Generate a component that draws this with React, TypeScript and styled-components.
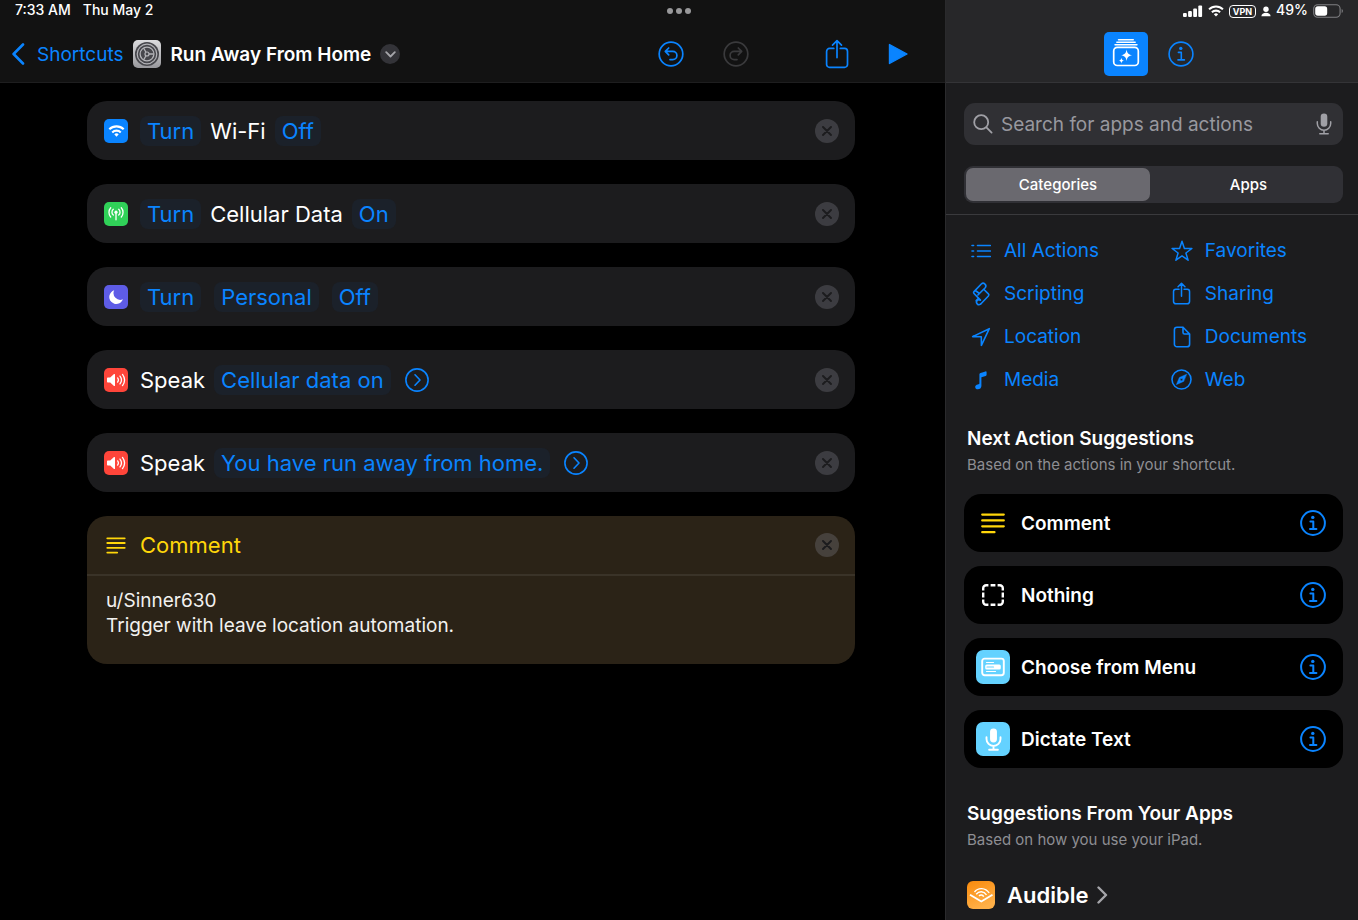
import React from 'react';
import styled, { createGlobalStyle } from 'styled-components';

const c = {
  blue: '#0a84ff',
  yellow: '#ffd60a',
  card: '#1c1c1e',
  panel: '#1c1c1e',
  grey: '#8e8e93',
};

const GlobalStyle = createGlobalStyle`
  *, *::before, *::after { box-sizing: border-box; }
  body {
    margin: 0;
    background: #000;
    color: #fff;
    font-family: Inter, "Liberation Sans", sans-serif;
    -webkit-font-smoothing: antialiased;
  }
  button, input, textarea { font: inherit; color: inherit; }
  button { border: 0; padding: 0; background: none; cursor: pointer; }
  h1, h2, p { margin: 0; }
  a { text-decoration: none; }
  svg { display: block; flex: none; }
`;

/* ---------- shell ---------- */

const Page = styled.div`
  display: grid;
  grid-template-columns: minmax(0, 1fr) 413px;
  min-height: 100vh;
`;
const Editor = styled.main`
  background: #000;
`;
const Sidebar = styled.aside`
  background: ${c.panel};
  border-left: 1px solid #2a2a2c;
`;
const Header = styled.header<{ $side?: boolean }>`
  display: grid;
  grid-template-rows: 22px 1fr;
  height: 83px;
  background: ${p => (p.$side ? '#272729' : '#121212')};
  border-bottom: 1px solid ${p => (p.$side ? '#343437' : '#1e1e1f')};
`;
const Status = styled.div<{ $end?: boolean }>`
  display: flex;
  align-items: center;
  justify-content: ${p => (p.$end ? 'flex-end' : 'flex-start')};
  gap: ${p => (p.$end ? '5px' : '12px')};
  height: 22px;
  padding: 0 14px 0 15px;
  font-size: 14px;
  line-height: 20px;
  font-weight: 500;
`;
const StatusText = styled.span`
  padding-bottom: 2px;
`;
const Dots = styled.button`
  display: flex;
  gap: 3px;
  margin-left: auto;
  margin-right: 240px;
`;
const Dot = styled.span`
  width: 6px;
  height: 6px;
  border-radius: 50%;
  background: #98989a;
`;
const Vpn = styled.span`
  padding: 0 3px;
  border: 1px solid #fff;
  border-radius: 4px;
  font-size: 9px;
  line-height: 11px;
  font-weight: 700;
`;

/* ---------- toolbar ---------- */

const Toolbar = styled.div`
  display: flex;
  align-items: center;
  height: 64px;
  padding: 0 37px 0 11px;
`;
const Back = styled.a`
  display: flex;
  align-items: center;
  gap: 12px;
  color: ${c.blue};
  font-size: 19px;
`;
const Title = styled.h1`
  display: flex;
  align-items: center;
  gap: 9px;
  margin-left: 10px;
  font-size: 19px;
  font-weight: 600;
  white-space: nowrap;
`;
const RoundButton = styled.button<{ $size: number; $bg: string }>`
  display: grid;
  place-items: center;
  flex: none;
  width: ${p => p.$size}px;
  height: ${p => p.$size}px;
  border-radius: 50%;
  background: ${p => p.$bg};
`;
const Tools = styled.div`
  display: flex;
  align-items: center;
  margin-left: auto;
`;
const Tool = styled.button<{ $gap?: number }>`
  display: flex;
  color: ${c.blue};
  margin-left: ${p => p.$gap ?? 0}px;
  &:disabled { color: #3a3a3c; cursor: default; }
`;
const PanelTabs = styled.div`
  display: flex;
  align-items: center;
  justify-content: center;
  gap: 20px;
  height: 64px;
  padding-right: 6px;
`;
const PanelTab = styled.button<{ $on?: boolean }>`
  display: flex;
  border-radius: 5px;
  color: ${p => (p.$on ? '#fff' : c.blue)};
  background: ${p => (p.$on ? c.blue : 'none')};
`;

/* ---------- action list ---------- */

const Actions = styled.div`
  display: flex;
  flex-direction: column;
  gap: 24px;
  padding: 18px 90px 40px 87px;
`;
const Card = styled.section<{ $note?: boolean }>`
  border-radius: 20px;
  background: ${p => (p.$note ? '#2b2317' : c.card)};
`;
const CardRow = styled.div<{ $note?: boolean }>`
  display: flex;
  align-items: center;
  height: ${p => (p.$note ? 58 : 59)}px;
  padding: 0 16px 0 17px;
  gap: 12px;
  font-size: 22px;
  color: ${p => (p.$note ? c.yellow : '#fff')};
`;
const Badge = styled.span<{ $bg?: string; $size?: number }>`
  display: grid;
  place-items: center;
  flex: none;
  width: ${p => p.$size ?? 24}px;
  height: ${p => p.$size ?? 24}px;
  border-radius: ${p => ((p.$size ?? 24) > 24 ? 7 : 5)}px;
  background: ${p => p.$bg ?? 'none'};
`;
const Phrase = styled.div`
  display: flex;
  align-items: center;
  flex: 1;
  gap: 9px;
  min-width: 0;
  white-space: nowrap;
`;
const Token = styled.button`
  height: 30px;
  padding: 0 7px;
  border-radius: 8px;
  background: #1b212a;
  color: ${c.blue};
  & + & { margin-left: 4px; }
`;
const More = styled.button`
  display: flex;
  margin-left: 5px;
  color: ${c.blue};
`;
const NoteText = styled.textarea`
  display: block;
  width: 100%;
  height: 90px;
  padding: 12px 19px 0;
  border: 0;
  border-top: 2px solid #3a3328;
  background: none;
  outline: 0;
  resize: none;
  overflow: hidden;
  color: #f2f1ef;
  font-size: 19px;
  line-height: 25px;
`;

/* ---------- sidebar ---------- */

const Finder = styled.div`
  padding: 20px 15px 11px 18px;
  border-bottom: 1px solid #3a3a3d;
`;
const Search = styled.label`
  display: flex;
  align-items: center;
  gap: 8px;
  height: 42px;
  padding: 0 11px 0 9px;
  border-radius: 11px;
  background: #303034;
  color: #a0a0a6;
`;
const SearchInput = styled.input`
  flex: 1;
  min-width: 0;
  padding: 0;
  border: 0;
  outline: 0;
  background: none;
  font-size: 19px;
  &::placeholder { color: #98989f; opacity: 1; }
`;
const Segments = styled.div`
  display: grid;
  grid-template-columns: 184px 1fr;
  column-gap: 6px;
  margin-top: 21px;
  height: 37px;
  padding: 2px;
  border-radius: 9px;
  background: #303035;
`;
const Segment = styled.button<{ $on?: boolean }>`
  border-radius: 7px;
  background: ${p => (p.$on ? '#6a696f' : 'none')};
  font-size: 15px;
  line-height: 20px;
  font-weight: 500;
`;
const Content = styled.div`
  padding: 14px 15px 11px 18px;
`;
const Categories = styled.nav`
  display: grid;
  grid-template-columns: 53% 1fr;
  grid-auto-rows: 43px;
`;
const Category = styled.a`
  display: grid;
  grid-template-columns: 34px 1fr;
  align-items: center;
  gap: 6px;
  color: ${c.blue};
  font-size: 19px;
  & > svg { justify-self: center; }
`;
const Heading = styled.h2<{ $top: number }>`
  margin: ${p => p.$top}px 3px 4px;
  font-size: 19px;
  line-height: 24px;
  font-weight: 600;
`;
const Sub = styled.p`
  margin: 0 3px;
  font-size: 15px;
  line-height: 20px;
  color: ${c.grey};
`;
const Suggestions = styled.div`
  display: grid;
  gap: 14px;
  margin-top: 19px;
`;
const Suggestion = styled.div`
  display: flex;
  align-items: center;
  gap: 11px;
  height: 58px;
  padding: 0 17px 0 12px;
  border-radius: 17px;
  background: #000;
  font-size: 19px;
  font-weight: 600;
`;
const Name = styled.span`
  flex: 1;
`;
const AppLink = styled.a`
  display: inline-flex;
  align-items: center;
  gap: 12px;
  margin: 31px 3px 0;
  color: #fff;
  font-size: 22px;
  line-height: 28px;
  font-weight: 600;
`;
const AppName = styled.span`
  display: flex;
  align-items: center;
  gap: 9px;
`;

/* ---------- icons ---------- */

type IconProps = { w: number; h?: number; box?: string; sw?: number; children: React.ReactNode };
const Icon = ({ w, h = w, box, sw = 1.6, children }: IconProps) => (
  <svg width={w} height={h} viewBox={box ?? `0 0 ${w} ${h}`} fill="none" stroke="currentColor"
    strokeWidth={sw} strokeLinecap="round" strokeLinejoin="round" aria-hidden="true">
    {children}
  </svg>
);

const WifiGlyph = ({ w, h }: { w: number; h: number }) => (
  <Icon w={w} h={h} box="0 0 18 13" sw={2.3}>
    <path d="M1.2 4.7a11 11 0 0 1 15.600 0M4.400 8a6.500 6.500 0 0 1 9.200 0" strokeLinecap="butt" />
    <path d="M9 12.6 6.6 10.1a3.5 3.5 0 0 1 4.8 0Z" fill="currentColor" stroke="none" />
  </Icon>
);
const Signal = () => (
  <Icon w={20} h={12}>
    <g fill="currentColor" stroke="none">
      <rect x="0" y="8" width="3.8" height="4" rx="1" />
      <rect x="5.1" y="6" width="3.8" height="6" rx="1" />
      <rect x="10.2" y="3.4" width="3.8" height="8.6" rx="1" />
      <rect x="15.3" y="0.6" width="3.8" height="11.4" rx="1" />
    </g>
  </Icon>
);
const Person = () => (
  <Icon w={10} h={11}>
    <g fill="currentColor" stroke="none">
      <circle cx="5" cy="3.2" r="2.7" />
      <path d="M0.4 10.2c0-2.2 2-3.4 4.6-3.4s4.6 1.2 4.6 3.4Z" />
    </g>
  </Icon>
);
const Battery = () => (
  <Icon w={31} h={14} sw={1.1}>
    <rect x="0.7" y="0.8" width="26.4" height="12.4" rx="4" stroke="#808083" />
    <rect x="2.2" y="2.3" width="12" height="9.4" rx="2.600" fill="#fff" stroke="none" />
    <path d="M28.700 5v4c1.600-.7 1.600-3.300 0-4Z" fill="#808083" stroke="none" />
  </Icon>
);
const Chevron = () => <Icon w={14} h={22} sw={2.6}><path d="M12 1.5 2.6 11l9.4 9.5" /></Icon>;
const Gear = () => (
  <svg width="28" height="28" viewBox="0 0 28 28" fill="none" aria-hidden="true">
    <defs>
      <linearGradient id="gearBg" x1="0" y1="0" x2="0" y2="1">
        <stop offset="0" stopColor="#dcdcde" />
        <stop offset="1" stopColor="#98989c" />
      </linearGradient>
    </defs>
    <rect width="28" height="28" rx="5" fill="url(#gearBg)" />
    <circle cx="14" cy="14" r="12" fill="#47474c" />
    <circle cx="14" cy="14" r="9.800" stroke="#b4b4b8" strokeWidth="1.200" />
    <circle cx="14" cy="14" r="6.900" stroke="#b4b4b8" strokeWidth="1.300" />
    <path d="M16 14h4.500M13 12.300l-2.300-4M13 15.700l-2.300 4" stroke="#b4b4b8" strokeWidth="1.300" />
    <circle cx="14" cy="14" r="2" stroke="#b4b4b8" strokeWidth="1.200" />
  </svg>
);
const Undo = ({ flip }: { flip?: boolean }) => (
  <Icon w={26} sw={1.7}>
    <circle cx="13" cy="13" r="11.8" />
    <g transform={flip ? 'matrix(-1 0 0 1 26 0)' : undefined}>
      <path d="M10.7 7 7.3 10.4l3.4 3.4M7.6 10.4h7.2a4.1 4.1 0 0 1 0 8.2H12" />
    </g>
  </Icon>
);
const Share = ({ w, h, sw }: { w: number; h: number; sw: number }) => (
  <Icon w={w} h={h} box="0 0 24 30" sw={sw}>
    <path d="M8.8 9.4H4.6a3 3 0 0 0-3 3v13a3 3 0 0 0 3 3h14.900a3 3 0 0 0 3-3v-13a3 3 0 0 0-3-3h-4.2M12 18.6V1.8M7.5 6.2 12 1.7l4.5 4.5" />
  </Icon>
);
const Play = () => (
  <Icon w={20} h={22} sw={1.4}>
    <path d="M1.5 1.500v19L19 11Z" fill="currentColor" />
  </Icon>
);
const Library = () => (
  <Icon w={44} sw={1.6}>
    <path d="M14.5 7.8h14.8M12.8 10.300h18.4M11 12.800h22" strokeWidth="1.4" />
    <rect x="9.7" y="15.300" width="24.6" height="18.2" rx="3.6" strokeWidth="1.7" />
    <path d="M22.6 17.6c.7 3.8 1.7 4.9 5.5 5.7-3.8.8-4.8 1.9-5.5 5.7-.7-3.8-1.7-4.900-5.5-5.7 3.800-.8 4.800-1.900 5.5-5.700ZM17.4 25.7c.4 1.9.9 2.5 2.7 2.9-1.8.4-2.3 1-2.7 2.900-.4-1.900-.9-2.500-2.700-2.900 1.800-.4 2.300-1 2.700-2.900Z" fill="currentColor" stroke="none" />
  </Icon>
);
const Info = ({ sw = 1.8 }: { sw?: number }) => (
  <Icon w={26} sw={sw}>
    <circle cx="13" cy="13" r="11.9" />
    <circle cx="12.8" cy="7.4" r="1.7" fill="currentColor" stroke="none" />
    <path d="M10.4 11.4h2.9v7.4M10 18.9h6.400" />
  </Icon>
);
const Cross = () => <Icon w={10} sw={1.9}><path d="m1 1 8 8M9 1 1 9" /></Icon>;
const Antenna = () => (
  <Icon w={18} h={14} sw={1.3}>
    <circle cx="9" cy="5.2" r="1.6" fill="currentColor" stroke="none" />
    <path d="M9 5.5v7.3M6.3 8.100a3.800 3.800 0 0 1 0-5.800M11.700 8.100a3.800 3.800 0 0 0 0-5.800M3.700 10a7 7 0 0 1 0-9.200M14.300 10a7 7 0 0 0 0-9.200" />
  </Icon>
);
const Moon = () => (
  <Icon w={16}>
    <path d="M6.200 1.300a7 7 0 1 0 8.700 9A6.700 6.700 0 0 1 6.200 1.300Z" fill="currentColor" stroke="none" />
  </Icon>
);
const Speaker = () => (
  <Icon w={20} h={14} sw={1.3}>
    <path d="M1 5.200c0-.5.3-.8.8-.8h2.400l3.800-3.300c.5-.4 1-.2 1 .4v11c0 .6-.5.8-1 .4L4.200 9.600H1.800c-.5 0-.8-.3-.8-.8Z" fill="currentColor" stroke="none" />
    <path d="M11.600 4.900a3.500 3.500 0 0 1 0 4.200M14 3.100a6.400 6.400 0 0 1 0 7.800M16.500 1.400a9.400 9.400 0 0 1 0 11.200" />
  </Icon>
);
const MoreGlyph = () => <Icon w={24} sw={1.6}><circle cx="12" cy="12" r="11.1" /><path d="m10 6.800 5 5.200-5 5.200" /></Icon>;
const Lines = ({ w, h }: { w: number; h: number }) => (
  <Icon w={w} h={h} box="0 0 24 21" sw={2.2}>
    <path d="M1.200 1.600h21.600M1.200 7.400h21.600M1.200 13.300h21.600M1.200 19.200h12.300" />
  </Icon>
);
const Glass = () => <Icon w={20} sw={1.8}><circle cx="8.200" cy="8.200" r="7" /><path d="m13.400 13.400 5.200 5.200" /></Icon>;
const Mic = ({ w, h, sw }: { w: number; h: number; sw: number }) => (
  <Icon w={w} h={h} box="0 0 16 22" sw={sw}>
    <rect x="4.700" y="0.400" width="6.600" height="13.400" rx="3.300" fill="currentColor" stroke="none" />
    <path d="M1.300 8.800v1.700a6.700 6.700 0 0 0 13.400 0V8.800M8 17.400v3M3.800 20.800h8.400" />
  </Icon>
);
const Dashed = () => (
  <Icon w={24} sw={2.4}>
    <path strokeLinecap="butt" d="M2.200 7.400V5.200a3 3 0 0 1 3-3h2.200M9.600 2.200h4.800M16.600 2.200h2.200a3 3 0 0 1 3 3v2.200M21.800 9.600v4.800M21.800 16.600v2.200a3 3 0 0 1-3 3h-2.200M14.400 21.800H9.600M7.400 21.800H5.200a3 3 0 0 1-3-3v-2.200M2.200 14.400V9.600" />
  </Icon>
);
const MenuGlyph = () => (
  <Icon w={24} h={20} sw={1.9}>
    <rect x="1.200" y="1.600" width="21.600" height="16.600" rx="2.400" />
    <path d="M5.500 5.500h7M5.500 14.500h9" strokeWidth="1.200" />
    <rect x="4.200" y="7.500" width="15.600" height="4.900" rx="1.500" fill="currentColor" stroke="none" />
    <path d="M6 10h6.500" stroke="#64d2ff" strokeWidth="1.200" />
  </Icon>
);
const ListGlyph = () => (
  <Icon w={20} h={14} sw={1.6}>
    <path d="M6.500 1.500h12.800M6.500 7h12.800M6.500 12.500h12.800M1 1.500h1.600M1 7h1.600M1 12.500h1.600" />
  </Icon>
);
const Scroll = () => (
  <Icon w={20} h={26} sw={1.6}>
    <path d="M3 10.600 10.300 3a2.700 2.700 0 0 1 3.900 3.700L6.900 14M3 10.600a1.300 1.300 0 0 0 0 1.900l6.400 6.600M12.700 8.200l4.700 4.700a1.500 1.500 0 0 1 0 2.100l-7.900 8.200M3 10.600l1.200-1.100 4.300 3" />
    <path d="M9.500 23.200a2.500 2.500 0 1 1-.1-4.100" />
    <path d="m5.200 19.700 2.400-2.300" />
  </Icon>
);
const Arrow = () => <Icon w={20} sw={1.6}><path d="M1.600 9.600 18.300 1.700l-7.900 16.700-.1-8.700Z" /></Icon>;
const Note = () => (
  <Icon w={14} h={20}>
    <path d="M5.400 4.300c0-.7.4-1.200 1.100-1.400l5-1.500c.7-.2 1.100.1 1.100.8v2.500c0 .6-.3 1-.9 1.200L7.400 7.200v8.700c0 2-1.500 3.300-3.600 3.300-1.500 0-2.600-.9-2.600-2.300 0-1.300 1-2.200 2.600-2.500 1.200-.2 1.600-.5 1.600-1.200Z" fill="currentColor" stroke="none" />
  </Icon>
);
const Star = () => (
  <Icon w={22} h={21} sw={1.5}>
    <path d="m11 1.300 2.400 7.100 7.500.1-6 4.500 2.200 7.200-6.100-4.300-6.100 4.300 2.200-7.200-6-4.500 7.500-.1Z" />
  </Icon>
);
const Doc = () => (
  <Icon w={18} h={22} sw={1.6}>
    <path d="M10 1.200H4a2.600 2.600 0 0 0-2.600 2.600v14.400A2.600 2.600 0 0 0 4 20.800h10a2.600 2.600 0 0 0 2.600-2.600V8L10 1.200v5.200A1.600 1.600 0 0 0 11.600 8h5" />
  </Icon>
);
const Compass = () => (
  <Icon w={21} sw={1.6}>
    <circle cx="10.500" cy="10.500" r="9.500" />
    <path fillRule="evenodd" d="M15.600 5.200 8.300 8.400 5.300 15.700l7.300-3.200ZM10.500 9.300a1.200 1.200 0 1 1 0 2.400 1.200 1.200 0 0 1 0-2.400Z" fill="currentColor" strokeWidth="0.400" />
  </Icon>
);
const Audible = () => (
  <svg width="28" height="28" viewBox="0 0 28 28" fill="none" stroke="#fff" aria-hidden="true">
    <defs>
      <linearGradient id="audibleBg" x1="0" y1="0" x2="0.4" y2="1">
        <stop offset="0" stopColor="#f98a0c" />
        <stop offset="1" stopColor="#ffb048" />
      </linearGradient>
    </defs>
    <rect width="28" height="28" rx="6" fill="url(#audibleBg)" stroke="none" />
    <path d="m3 13.800 11.300 6.700 11.200-6.700" strokeWidth="1.900" />
    <path d="M7.500 11C11 6.300 18.500 6.300 22.200 12" strokeWidth="1.300" />
    <path d="M9.200 13.200c2.900-3.400 7.600-3.300 10.300.7" strokeWidth="1.400" />
    <path d="M12 14.900c1.600-1.400 3.500-1.200 4.800.7" strokeWidth="1.400" />
  </svg>
);

/* ---------- data ---------- */

const Yellow = styled.span`
  color: ${c.yellow};
`;
const Muted = styled.span`
  color: #a5a5aa;
`;
const RemoveMark = styled.span`
  color: #1c1c1e;
`;

type Part = { text: string; token?: boolean };
const actions: { bg: string; icon: React.ReactNode; parts: Part[]; more?: boolean }[] = [
  { bg: c.blue, icon: <WifiGlyph w={17} h={12} />, parts: [{ text: 'Turn', token: true }, { text: 'Wi-Fi' }, { text: 'Off', token: true }] },
  { bg: '#30d158', icon: <Antenna />, parts: [{ text: 'Turn', token: true }, { text: 'Cellular Data' }, { text: 'On', token: true }] },
  { bg: '#5e5ce6', icon: <Moon />, parts: [{ text: 'Turn', token: true }, { text: 'Personal', token: true }, { text: 'Off', token: true }] },
  { bg: '#ff453a', icon: <Speaker />, parts: [{ text: 'Speak' }, { text: 'Cellular data on', token: true }], more: true },
  { bg: '#ff453a', icon: <Speaker />, parts: [{ text: 'Speak' }, { text: 'You have run away from home.', token: true }], more: true },
];
const categories: [string, React.ReactNode][] = [
  ['All Actions', <ListGlyph />],
  ['Favorites', <Star />],
  ['Scripting', <Scroll />],
  ['Sharing', <Share w={19} h={23} sw={2} />],
  ['Location', <Arrow />],
  ['Documents', <Doc />],
  ['Media', <Note />],
  ['Web', <Compass />],
];
const suggestions: { name: string; icon: React.ReactNode; bg?: string }[] = [
  { name: 'Comment', icon: <Yellow><Lines w={24} h={21} /></Yellow> },
  { name: 'Nothing', icon: <Dashed /> },
  { name: 'Choose from Menu', icon: <MenuGlyph />, bg: '#64d2ff' },
  { name: 'Dictate Text', icon: <Mic w={17} h={23} sw={1.8} />, bg: '#64d2ff' },
];

const Remove = () => (
  <RoundButton $size={24} $bg="rgba(120, 120, 128, 0.36)" aria-label="Remove action">
    <RemoveMark><Cross /></RemoveMark>
  </RoundButton>
);

export default function App() {
  return (
    <>
      <GlobalStyle />
      <Page>
        <Editor>
          <Header>
            <Status>
              <StatusText>7:33 AM</StatusText>
              <StatusText>Thu May 2</StatusText>
              <Dots aria-label="Window options"><Dot /><Dot /><Dot /></Dots>
            </Status>
            <Toolbar>
              <Back href="#shortcuts"><Chevron />Shortcuts</Back>
              <Title>
                <Gear />
                Run Away From Home
                <RoundButton $size={20} $bg="#333338" aria-label="Shortcut options">
                  <Muted><Icon w={11} h={7} sw={1.8}><path d="m1.200 1.200 4.300 4.300 4.300-4.300" /></Icon></Muted>
                </RoundButton>
              </Title>
              <Tools>
                <Tool aria-label="Undo"><Undo /></Tool>
                <Tool aria-label="Redo" disabled $gap={39}><Undo flip /></Tool>
                <Tool aria-label="Share" $gap={76}><Share w={24} h={30} sw={1.7} /></Tool>
                <Tool aria-label="Run" $gap={39}><Play /></Tool>
              </Tools>
            </Toolbar>
          </Header>
          <Actions>
            {actions.map((a, i) => (
              <Card key={i}>
                <CardRow>
                  <Badge $bg={a.bg}>{a.icon}</Badge>
                  <Phrase>
                    {a.parts.map(p => (p.token ? <Token key={p.text}>{p.text}</Token> : <span key={p.text}>{p.text}</span>))}
                    {a.more && <More aria-label="Show more"><MoreGlyph /></More>}
                  </Phrase>
                  <Remove />
                </CardRow>
              </Card>
            ))}
            <Card $note>
              <CardRow $note>
                <Badge><Lines w={20} h={17} /></Badge>
                <Phrase>Comment</Phrase>
                <Remove />
              </CardRow>
              <NoteText aria-label="Comment" defaultValue={'u/Sinner630\nTrigger with leave location automation.'} />
            </Card>
          </Actions>
        </Editor>

        <Sidebar>
          <Header $side>
            <Status $end>
              <Signal />
              <WifiGlyph w={16} h={12} />
              <Vpn>VPN</Vpn>
              <Person />
              <StatusText>49%</StatusText>
              <Battery />
            </Status>
            <PanelTabs>
              <PanelTab $on aria-label="Action library"><Library /></PanelTab>
              <PanelTab aria-label="Shortcut details"><Info sw={1.6} /></PanelTab>
            </PanelTabs>
          </Header>
          <Finder>
            <Search>
              <Glass />
              <SearchInput type="text" aria-label="Search" placeholder="Search for apps and actions" />
              <Mic w={16} h={22} sw={1.5} />
            </Search>
            <Segments>
              <Segment $on>Categories</Segment>
              <Segment>Apps</Segment>
            </Segments>
          </Finder>
          <Content>
            <Categories>
              {categories.map(([name, icon]) => (
                <Category key={name} href={`#${name}`}>{icon}{name}</Category>
              ))}
            </Categories>
            <Heading $top={26}>Next Action Suggestions</Heading>
            <Sub>Based on the actions in your shortcut.</Sub>
            <Suggestions>
              {suggestions.map(s => (
                <Suggestion key={s.name}>
                  <Badge $size={34} $bg={s.bg}>{s.icon}</Badge>
                  <Name>{s.name}</Name>
                  <Tool aria-label={`About ${s.name}`}><Info sw={2} /></Tool>
                </Suggestion>
              ))}
            </Suggestions>
            <Heading $top={34}>Suggestions From Your Apps</Heading>
            <Sub>Based on how you use your iPad.</Sub>
            <AppLink href="#audible">
              <Audible />
              <AppName>
                Audible
                <Muted><Icon w={11} h={18} sw={2.4}><path d="m1.500 1.500 7.500 7.500-7.500 7.500" /></Icon></Muted>
              </AppName>
            </AppLink>
          </Content>
        </Sidebar>
      </Page>
    </>
  );
}
